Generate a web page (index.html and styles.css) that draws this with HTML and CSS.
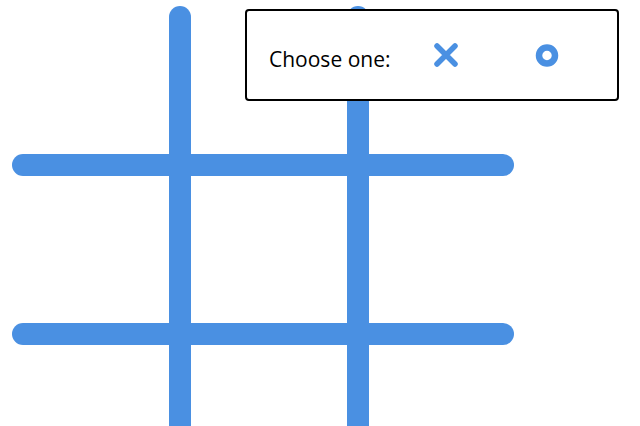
FILE: index.html
```html
<!DOCTYPE html>
<html>
<head>
<meta charset="utf-8">
<link rel="stylesheet" href="styles.css">
</head>
<body>
<div class="board">
  <svg class="grid" width="640" height="426" viewBox="0 0 640 426">
    <g stroke="#4A90E2" stroke-width="22" stroke-linecap="round">
      <line x1="23" y1="165" x2="503" y2="165"/>
      <line x1="23" y1="334" x2="503" y2="334"/>
      <line x1="180" y1="17" x2="180" y2="460"/>
      <line x1="358" y1="17" x2="358" y2="460"/>
    </g>
  </svg>
  <div class="chooser">
    <span class="label">Choose one:</span>
    <button class="pick">
      <svg width="24" height="24" viewBox="0 0 24 24"><path d="M3 3L21 21M21 3L3 21" stroke="#4A90E2" stroke-width="5.5" stroke-linecap="round" fill="none"/></svg>
    </button>
    <button class="pick">
      <svg width="24" height="24" viewBox="0 0 24 24"><circle cx="12" cy="12.5" r="8" stroke="#4A90E2" stroke-width="6.5" fill="none"/></svg>
    </button>
  </div>
</div>
</body>
</html>
```
FILE: styles.css
```css
html, body {
  margin: 0;
  padding: 0;
  background: #fff;
}
.board {
  position: relative;
  width: 640px;
  height: 426px;
  overflow: hidden;
}
.grid {
  display: block;
}
.chooser {
  position: absolute;
  left: 245px;
  top: 9px;
  width: 374px;
  height: 92px;
  box-sizing: border-box;
  border: 2px solid #000;
  border-radius: 4px;
  background: #fff;
  display: flex;
  align-items: center;
  padding-left: 22px;
  font-family: "Open Sans", sans-serif;
  font-size: 21px;
  color: #000;
}
.label {
  width: 150px;
  padding-top: 8px;
}
.pick {
  width: 54px;
  height: 30px;
  border: 0;
  background: none;
  padding: 0;
  display: flex;
  align-items: center;
  justify-content: center;
}
.pick + .pick {
  margin-left: 47px;
}
```
